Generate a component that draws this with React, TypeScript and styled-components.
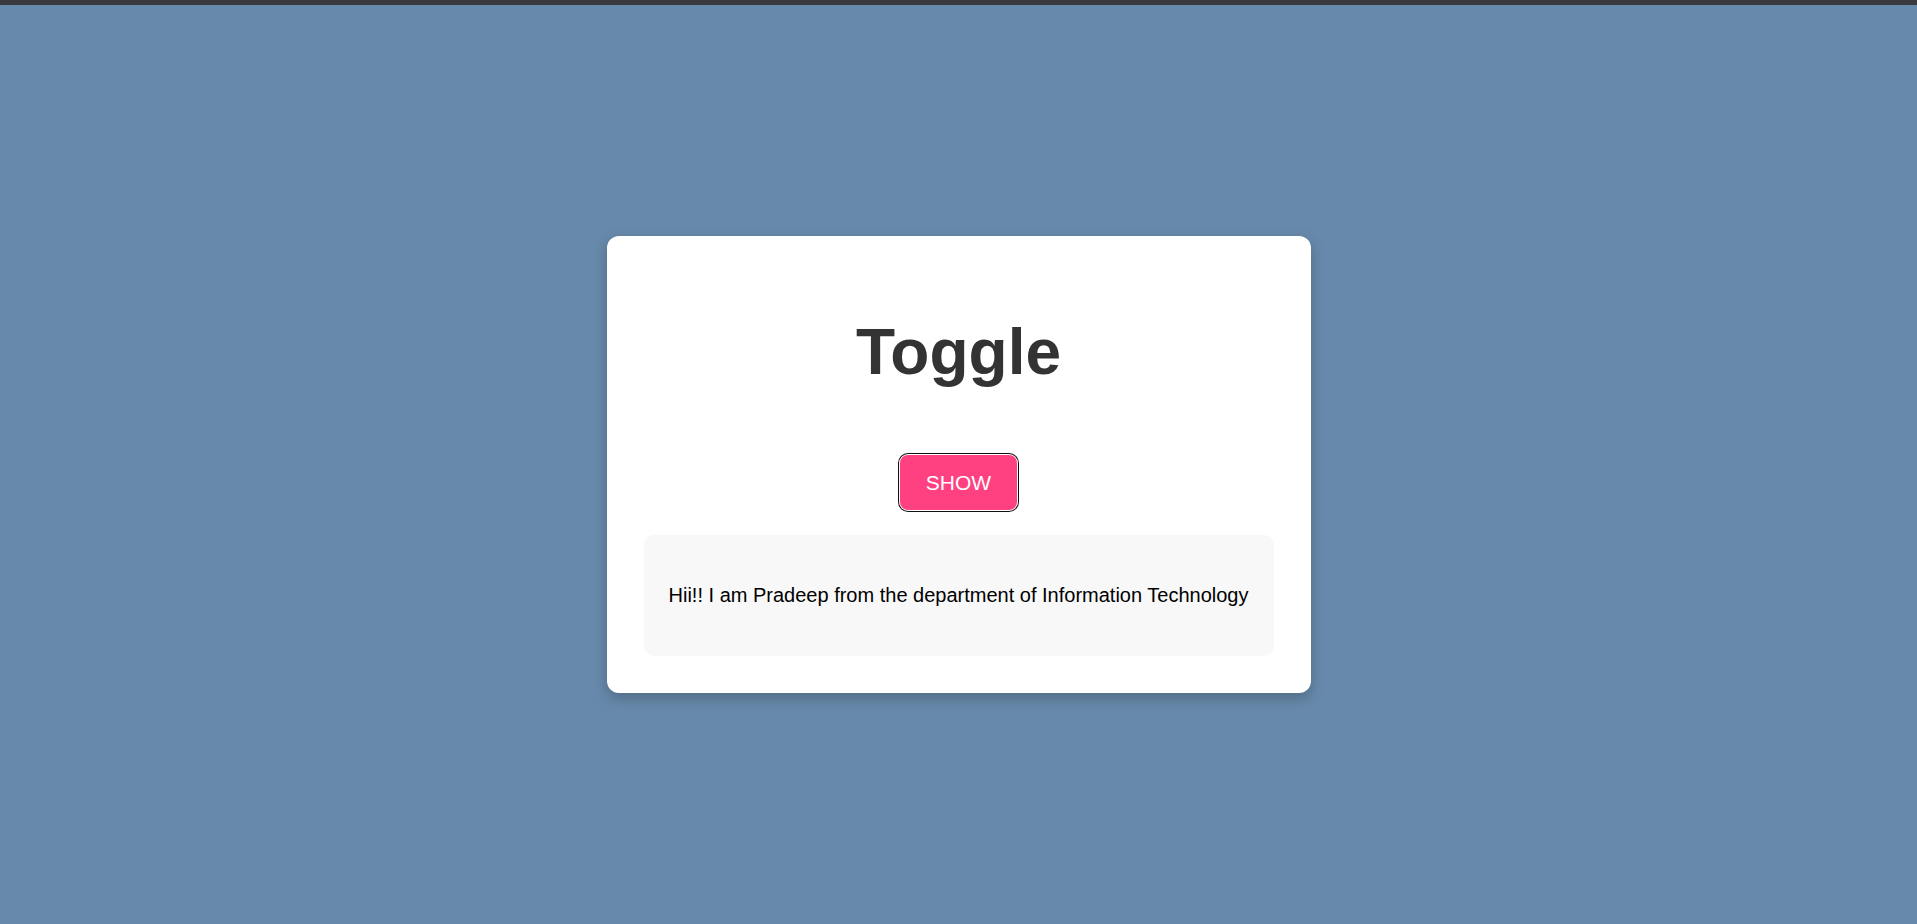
import React, { useState } from "react";
import styled, { createGlobalStyle } from "styled-components";

const Global = createGlobalStyle`
  html, body { margin: 0; padding: 0; }
  body {
    background: #6789ab;
    font-family: "Liberation Sans", Arial, Helvetica, sans-serif;
  }
`;

const TopBar = styled.div`
  height: 5px;
  background: #3a393f;
`;

const Stage = styled.main`
  min-height: 919px;
  display: flex;
  align-items: center;
  justify-content: center;
`;

const Card = styled.section`
  width: 704px;
  box-sizing: border-box;
  padding: 37px;
  background: #ffffff;
  border-radius: 12px;
  box-shadow: 0 5px 14px rgba(0, 0, 0, 0.22);
  display: flex;
  flex-direction: column;
  align-items: center;
`;

const Title = styled.h1`
  margin: 43px 0 66px;
  font-size: 64px;
  font-weight: 700;
  color: #333333;
  line-height: 1.15;
`;

const ToggleButton = styled.button`
  margin: 0 0 25px;
  padding: 15px 26px;
  font-family: "Liberation Sans", Arial, sans-serif;
  font-size: 21px;
  line-height: 25px;
  color: #ffffff;
  background: #ff4081;
  border: none;
  border-radius: 8px;
  cursor: pointer;
  box-shadow: 0 0 0 1px #ffffff, 0 0 0 2px #111111;
`;

const InfoBox = styled.div`
  align-self: stretch;
  background: #f8f8f8;
  border-radius: 10px;
  padding: 49px 20px;
  text-align: center;
`;

const InfoText = styled.p`
  margin: 0;
  font-size: 20px;
  line-height: 23px;
  color: #000000;
`;

export default function App() {
  const [shown, setShown] = useState(true);
  return (
    <>
      <Global />
      <TopBar />
      <Stage>
        <Card>
          <Title>Toggle</Title>
          <ToggleButton onClick={() => setShown((s) => !s)}>SHOW</ToggleButton>
          {shown && (
            <InfoBox>
              <InfoText>Hii!! I am Pradeep from the department of Information Technology</InfoText>
            </InfoBox>
          )}
        </Card>
      </Stage>
    </>
  );
}
